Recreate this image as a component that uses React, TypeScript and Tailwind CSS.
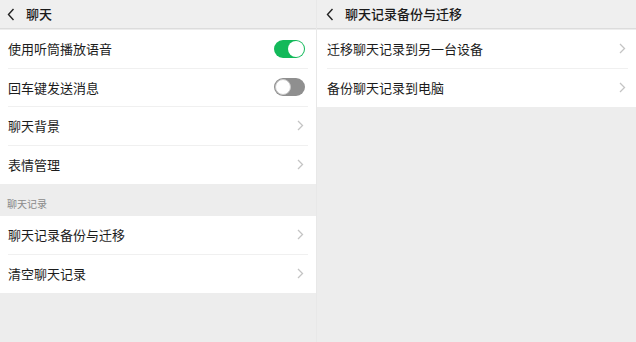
const font = { fontFamily: '"Noto Sans CJK SC", "Noto Sans", sans-serif' };

const Chevron = () => (
  <svg width="7" height="11" viewBox="0 0 7 11" className="shrink-0">
    <path d="M1 1l4.5 4.5L1 10" fill="none" stroke="#c4c4c4" strokeWidth="1.3" />
  </svg>
);

const Back = () => (
  <svg width="8" height="13" viewBox="0 0 8 13" className="shrink-0">
    <path d="M6.5 1L1.5 6.5l5 5.5" fill="none" stroke="#222" strokeWidth="1.4" />
  </svg>
);

const Toggle = ({ on }: { on: boolean }) =>
  on ? (
    <div className="w-[31px] h-[18px] rounded-full bg-[#13b95a] flex items-center justify-end pr-[1px]">
      <div className="w-[16px] h-[16px] rounded-full bg-white" />
    </div>
  ) : (
    <div className="w-[31px] h-[18px] rounded-full bg-[#8f8f8f] flex items-center pl-[1px]">
      <div className="w-[16px] h-[16px] rounded-full bg-white border border-[#c9c9c9]" />
    </div>
  );

const Row = ({ label, right, last, pad }: { label: string; right: React.ReactNode; last?: boolean; pad: string }) => (
  <div className={`h-[38.5px] bg-white ${pad} flex`}>
    <div className={`flex-1 flex items-center justify-between ${last ? "" : "border-b border-[#f0f0f0]"}`}>
      <span className="text-[13px] text-[#1c1c1c]">{label}</span>
      {right}
    </div>
  </div>
);

const Header = ({ title, pad }: { title: string; pad: string }) => (
  <div className={`h-[29px] bg-[#efefef] border-b border-[#dcdcdc] flex items-center gap-[11px] ${pad}`}>
    <Back />
    <span className="text-[13px] font-medium text-[#1a1a1a]">{title}</span>
  </div>
);

export default function App() {
  return (
    <div className="w-[636px] h-[342px] bg-[#ededed] flex overflow-hidden" style={font}>
      <div className="w-[316px] flex flex-col">
        <Header title="聊天" pad="pl-[7px]" />
        <div className="mt-[1px] flex flex-col">
          <Row label="使用听筒播放语音" right={<div className="mr-[3px]"><Toggle on /></div>} pad="pl-[8px] pr-[8px]" />
          <Row label="回车键发送消息" right={<div className="mr-[3px]"><Toggle on={false} /></div>} pad="pl-[8px] pr-[8px]" />
          <Row label="聊天背景" right={<div className="mr-[4px]"><Chevron /></div>} pad="pl-[8px] pr-[8px]" />
          <Row label="表情管理" right={<div className="mr-[4px]"><Chevron /></div>} pad="pl-[8px] pr-[8px]" last />
        </div>
        <div className="h-[32px] pl-[7px] flex items-end pb-[5px] text-[10px] text-[#8a8a8a]">聊天记录</div>
        <div className="flex flex-col">
          <Row label="聊天记录备份与迁移" right={<div className="mr-[4px]"><Chevron /></div>} pad="pl-[8px] pr-[8px]" />
          <Row label="清空聊天记录" right={<div className="mr-[4px]"><Chevron /></div>} pad="pl-[8px] pr-[8px]" last />
        </div>
      </div>
      <div className="flex-1 flex flex-col border-l border-[#e8e8e8]">
        <Header title="聊天记录备份与迁移" pad="pl-[9px]" />
        <div className="mt-[1px] flex flex-col">
          <Row label="迁移聊天记录到另一台设备" right={<div className="mr-[2px]"><Chevron /></div>} pad="pl-[10px] pr-[8px]" />
          <Row label="备份聊天记录到电脑" right={<div className="mr-[2px]"><Chevron /></div>} pad="pl-[10px] pr-[8px]" last />
        </div>
      </div>
    </div>
  );
}
